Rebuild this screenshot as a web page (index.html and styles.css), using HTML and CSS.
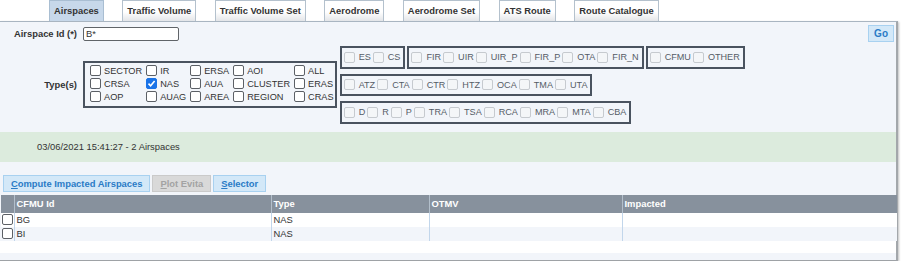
FILE: index.html
```html
<!DOCTYPE html>
<html>
	<head>
		<meta charset="utf-8">
		<title>Airspaces</title>
		<link rel="stylesheet" href="styles.css">
	</head>
	<body>
		<div class="tabs">
			<div class="tab active">Airspaces</div>
			<div class="tab">Traffic Volume</div>
			<div class="tab">Traffic Volume Set</div>
			<div class="tab">Aerodrome</div>
			<div class="tab">Aerodrome Set</div>
			<div class="tab">ATS Route</div>
			<div class="tab">Route Catalogue</div>
		</div>

		<div class="panel">
			<div class="form">
				<div class="label">Airspace Id (*)</div>
				<div class="id-row">
					<div class="input">B*</div>
					<div class="btn go">Go</div>
				</div>

				<div class="label">Type(s)</div>
				<div class="types">
					<table class="group main">
						<tr>
							<td><span class="cb"></span>SECTOR</td>
							<td><span class="cb"></span>IR</td>
							<td><span class="cb"></span>ERSA</td>
							<td><span class="cb"></span>AOI</td>
							<td><span class="cb"></span>ALL</td>
						</tr>
						<tr>
							<td><span class="cb"></span>CRSA</td>
							<td><span class="cb checked"></span>NAS</td>
							<td><span class="cb"></span>AUA</td>
							<td><span class="cb"></span>CLUSTER</td>
							<td><span class="cb"></span>ERAS</td>
						</tr>
						<tr>
							<td><span class="cb"></span>AOP</td>
							<td><span class="cb"></span>AUAG</td>
							<td><span class="cb"></span>AREA</td>
							<td><span class="cb"></span>REGION</td>
							<td><span class="cb"></span>CRAS</td>
						</tr>
					</table>

					<div class="subtypes">
						<div class="line">
							<div class="group sub">
								<span class="cb"></span>ES<span class="cb"></span>CS
							</div>
							<div class="group sub">
								<span class="cb"></span>FIR<span class="cb"></span>UIR<span class="cb"></span>UIR_P<span class="cb"></span>FIR_P<span class="cb"></span>OTA<span class="cb"></span>FIR_N
							</div>
							<div class="group sub">
								<span class="cb"></span>CFMU<span class="cb"></span>OTHER
							</div>
						</div>
						<div class="line">
							<div class="group sub">
								<span class="cb"></span>ATZ<span class="cb"></span>CTA<span class="cb"></span>CTR<span class="cb"></span>HTZ<span class="cb"></span>OCA<span class="cb"></span>TMA<span class="cb"></span>UTA
							</div>
						</div>
						<div class="line">
							<div class="group sub">
								<span class="cb"></span>D<span class="cb"></span>R<span class="cb"></span>P<span class="cb"></span>TRA<span class="cb"></span>TSA<span class="cb"></span>RCA<span class="cb"></span>MRA<span class="cb"></span>MTA<span class="cb"></span>CBA
							</div>
						</div>
					</div>
				</div>
			</div>

			<div class="status">03/06/2021 15:41:27 - 2 Airspaces</div>

			<div class="actions">
				<div class="btn"><u>C</u>ompute Impacted Airspaces</div>
				<div class="btn disabled"><u>P</u>lot Evita</div>
				<div class="btn"><u>S</u>elector</div>
			</div>

			<table class="grid">
				<colgroup>
					<col style="width: 13px">
					<col style="width: 257px">
					<col style="width: 158px">
					<col style="width: 193px">
					<col>
				</colgroup>
				<tr class="head">
					<th></th>
					<th>CFMU Id</th>
					<th>Type</th>
					<th>OTMV</th>
					<th>Impacted</th>
				</tr>
				<tr>
					<td><span class="cb"></span></td>
					<td>BG</td>
					<td>NAS</td>
					<td></td>
					<td></td>
				</tr>
				<tr class="alt">
					<td><span class="cb"></span></td>
					<td>BI</td>
					<td>NAS</td>
					<td></td>
					<td></td>
				</tr>
			</table>
			<div class="grid-foot"></div>
		</div>
	</body>
</html>
```

FILE: styles.css
```css
body {margin: 0; padding: 0; font-family: "Liberation Sans", Arial, sans-serif; font-size: 9.4px; color: #333; background: #fff;}

/* tabs */
.tabs {display: flex; align-items: flex-end; gap: 18.5px; height: 21px; padding-left: 49px;}
.tab {height: 20px; line-height: 20px; padding: 0 4px; font-weight: bold; color: #333; border: 1px solid #b4c1cd; border-bottom: 0; background: linear-gradient(#fff 55%, #e3e5e8);}
.tab.active {background: #c7d8ea; border-color: #a9bed2;}

/* panel */
.panel {width: 896px; background: #f2f5fa; border-top: 1px solid #a9b5c1; border-right: 2px solid #a3a7ab; border-bottom: 1px solid #9ea2a6; padding-bottom: 7px; box-shadow: 1px 1px 2px rgba(0, 0, 0, 0.25);}

.form {display: grid; grid-template-columns: 77px 1fr; column-gap: 6px; row-gap: 4px; padding-top: 3px;}
.label {font-weight: bold; text-align: right; align-self: center;}

.id-row {display: flex; align-items: center; justify-content: space-between; padding-right: 2px;}
.input {width: 90px; height: 12px; line-height: 12px; padding: 0 2px; background: #fff; border: 1px solid #606468; border-radius: 2px;}

.btn {height: 15px; line-height: 15px; padding: 0 7px; font-weight: bold; color: #2a7bc6; background: #d3e8f8; border: 1px solid #a8d1f0;}
.btn.go {font-size: 10px; padding: 0 5px;}
.btn.disabled {color: #a3a3a3; background: #d9d9d9; border-color: #cacaca;}

/* type checkboxes */
.types {display: flex; align-items: center; font-size: 9.1px;}
.group {border: 2px solid #4a535f;}
.main {border-collapse: separate; border-spacing: 0; padding: 2px 1px; font-size: 9.2px;}
.main td {padding: 0; height: 13px; line-height: 13px; white-space: nowrap;}

.cb {display: inline-block; width: 9px; height: 9px; margin: 0 3px 0 4px; vertical-align: -2px; background: #fff; border: 1px solid #5c6066; border-radius: 2px;}
.cb.checked {background: #1a73e8 url("data:image/svg+xml;utf8,<svg xmlns='http://www.w3.org/2000/svg' viewBox='0 0 9 9'><path d='M1.5 4.6 L3.6 6.7 L7.6 2' fill='none' stroke='white' stroke-width='1.6'/></svg>") no-repeat center; border-color: #1a73e8;}

.subtypes {display: flex; flex-direction: column; gap: 5px; margin-left: 3px;}
.line {display: flex; gap: 2px;}
.sub {display: flex; align-items: center; height: 18.5px; padding: 0 3px 0 0; color: #555c66; white-space: nowrap;}
.sub .cb {margin: 0 4px 0 2px; background: #f4f6f8; border-color: #c6cacf;}

/* status */
.status {margin-top: 8px; height: 30px; line-height: 30px; padding-left: 37px; background: #dcebdd;}

/* actions */
.actions {display: flex; gap: 2px; margin: 13px 0 3px 3px;}

/* result grid */
.grid {width: 896px; margin-left: 1px; border-collapse: collapse; table-layout: fixed;}
.grid th {height: 18px; padding: 0 0 0 2px; text-align: left; font-weight: bold; color: #fff; background: #87919d; border-left: 1px solid #b3bfcb;}
.grid th:first-child {border-left: 0;}
.grid td {height: 14px; padding: 0 0 0 2px; line-height: 14px; background: #fff; border-left: 1px solid #c2d6eb;}
.grid td:first-child {border-left: 0; padding: 0;}
.grid .alt td {background: #f2f5fa;}
.grid td .cb {margin: 0 0 0 1px; vertical-align: -2px;}
.grid-foot {height: 12px; background: #fff;}
```
